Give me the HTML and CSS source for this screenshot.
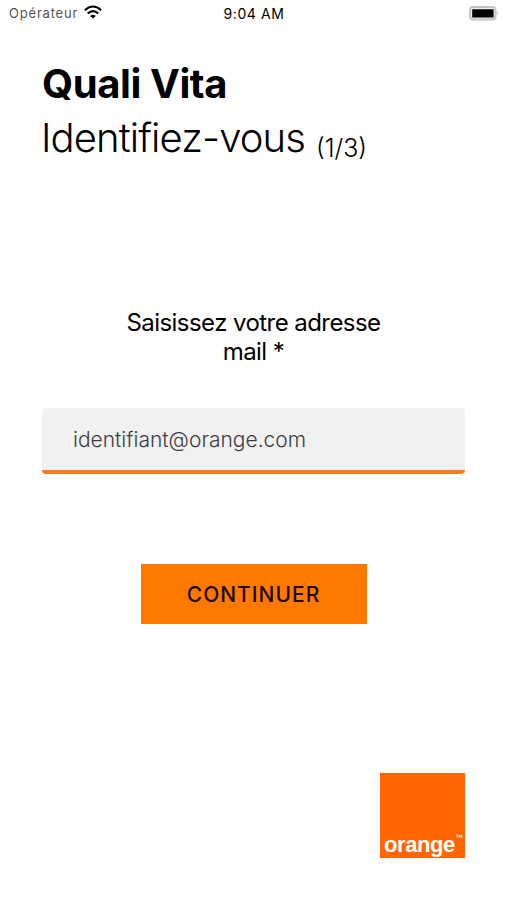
FILE: index.html
```html
<!DOCTYPE html>
<html lang="fr">
<head>
  <meta charset="utf-8">
  <title>Quali Vita</title>
  <link rel="stylesheet" href="styles.css">
</head>
<body>
  <div class="status-bar">
    <div class="carrier">
      <span>Opérateur</span>
      <svg class="wifi" width="18" height="14" viewBox="0 0 18 14" fill="none" stroke="#000" stroke-width="2.1">
        <path d="M0.8 5.2 Q9 -2.2 17.2 5.2"/>
        <path d="M3.7 8.5 Q9 3.6 14.3 8.5"/>
        <path d="M9 13.6 L6.2 11 Q9 8.6 11.8 11 Z" fill="#000" stroke="none"/>
      </svg>
    </div>
    <div class="time">9:04 AM</div>
    <div class="battery">
      <svg width="30" height="15" viewBox="0 0 30 15">
        <rect x="1" y="1" width="25.5" height="12.5" rx="3" fill="#eee" stroke="#c4c4c4" stroke-width="2"/>
        <rect x="3.2" y="3.2" width="21.4" height="8.2" rx="0.5" fill="#000"/>
        <path d="M28 5 Q29.8 7.2 28 9.4 Z" fill="#aaa"/>
      </svg>
    </div>
  </div>
  <div class="container">
    <h1>Quali Vita</h1>
    <h2><span class="subtitle">Identifiez-vous</span><span class="step">(1/3)</span></h2>
    <form class="login">
      <label for="email">Saisissez votre adresse mail *</label>
      <input id="email" type="email" placeholder="identifiant@orange.com">
      <button type="button">CONTINUER</button>
    </form>
    <div class="logo">
      <span class="logo-name">orange</span><span class="logo-tm">™</span>
    </div>
  </div>
</body>
</html>
```

FILE: styles.css
```css
body {
  margin: 0;
  height: 900px;
  background: #fff;
  color: #000;
  font-family: Inter, "Liberation Sans", sans-serif;
  overflow: hidden;
}
.status-bar {
  display: grid;
  grid-template-columns: 1fr auto 1fr;
  align-items: center;
  height: 26px;
  padding: 0 7px 0 9px;
  font-size: 13px;
}
.carrier {
  display: flex;
  align-items: center;
  gap: 6px;
  color: #555;
  letter-spacing: 0.8px;
}
.time {
  font-size: 14px;
  letter-spacing: 0.6px;
}
.wifi {
  margin-bottom: 2px;
}
.battery {
  display: flex;
  justify-content: flex-end;
}
.container {
  display: flex;
  flex-direction: column;
  padding: 32px 41px 0 42px;
}
h1 {
  margin: 0;
  font-size: 40px;
  line-height: 52px;
  font-weight: 700;
  letter-spacing: -0.4px;
}
h2 {
  display: flex;
  align-items: baseline;
  gap: 11px;
  margin: 0;
  height: 56px;
  line-height: 56px;
  font-weight: 300;
}
.subtitle {
  margin-left: -1px;
  font-size: 40px;
  letter-spacing: -0.9px;
}
.step {
  padding-top: 5px;
  font-size: 25px;
  position: relative;
  top: 5px;
}
.login {
  display: flex;
  flex-direction: column;
  align-items: center;
  margin-top: 142px;
}
label {
  width: 280px;
  font-size: 24px;
  line-height: 29px;
  letter-spacing: -0.56px;
  text-align: center;
}
input {
  box-sizing: border-box;
  width: 423px;
  height: 66px;
  margin-top: 42px;
  padding: 0 31px;
  border: 0;
  border-bottom: 4px solid #f97b1e;
  border-radius: 4px;
  background: #f1f1f1;
  font-family: inherit;
  font-size: 21px;
  font-weight: 300;
}
input::placeholder {
  color: #3c3c44;
}
button {
  width: 226px;
  height: 60px;
  margin-top: 90px;
  padding: 0;
  border: 0;
  background: #ff7900;
  color: #1a0c00;
  font-family: inherit;
  font-size: 21px;
  font-weight: 500;
  letter-spacing: 1px;
}
.logo {
  display: flex;
  align-items: flex-end;
  align-self: flex-end;
  box-sizing: border-box;
  width: 85px;
  height: 85px;
  margin-top: 149px;
  padding: 0 0 0 4px;
  background: #ff6600;
  color: #fff;
  font-family: "Liberation Sans", Arial, sans-serif;
  font-weight: 700;
}
.logo-name {
  font-size: 22px;
  line-height: 26px;
  letter-spacing: -0.4px;
}
.logo-tm {
  margin-bottom: 16px;
  font-size: 8px;
  line-height: 8px;
  font-weight: 400;
}
```
